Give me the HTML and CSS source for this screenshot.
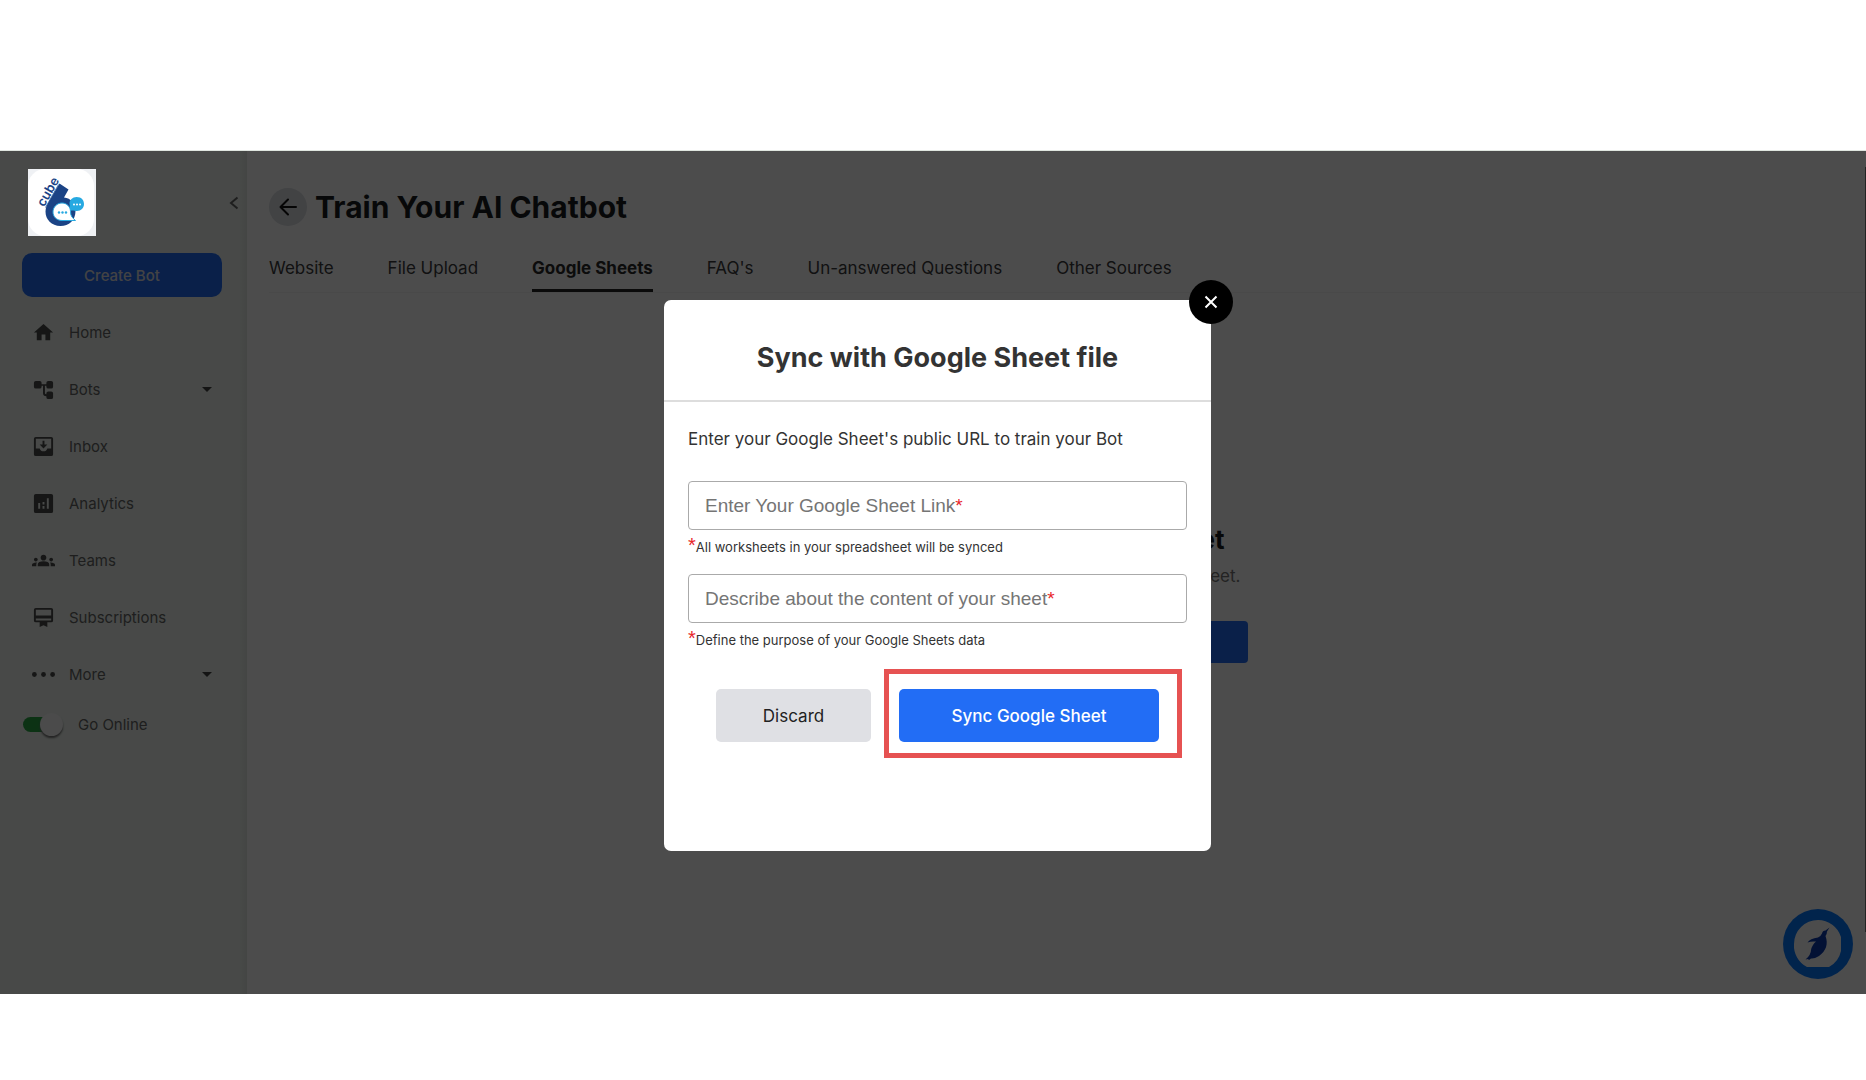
FILE: index.html
```html
<!DOCTYPE html>
<html lang="en">
<head>
<meta charset="utf-8">
<title>Train Your AI Chatbot</title>
<link rel="stylesheet" href="styles.css">
</head>
<body>
<div class="app">
  <aside class="sidebar">
    <div class="brand">
      <svg class="logo" viewBox="0 0 68 67" role="img" aria-label="6 Cube">
        <rect width="68" height="67" fill="#eff1f4"/>
        <rect width="66" height="67" rx="17" fill="#fff"/>
        <path d="M31.500 14.500 40.500 20.500 36 28.500C43 29 47.500 35 47.500 42C47.500 51 41 57 32.500 57C23.500 57 17.500 50.500 17.500 42.500C17.500 38.500 19 36 21 32.500Z" fill="#1b4385"/>
        <path d="M48.500 28C54 28 56 31.500 56 35C56 39 53 42 49 42C46.500 42 46 41.500 39.500 41.500C43 38 41.500 37 41.500 34.500C41.500 31 44.500 28 48.500 28Z" fill="#27a9e1"/>
        <path d="M34 34C39 34 42.500 38 42.500 42.500C42.500 47 44 48.500 47.500 51.500H34C28.500 51.500 25 47.500 25 43C25 38 29 34 34 34Z" fill="#fff" stroke="#27a9e1" stroke-width="1"/>
        <g fill="#27a9e1"><circle cx="31" cy="43.500" r="1.200"/><circle cx="34.500" cy="43.500" r="1.200"/><circle cx="38" cy="43.500" r="1.200"/></g>
        <g fill="#fff"><circle cx="46" cy="35.500" r="1"/><circle cx="49" cy="35.500" r="1"/><circle cx="52" cy="35.500" r="1"/></g>
        <path d="M17.500 38.500 30.500 15.500" stroke="#1b4385" stroke-width=".7"/>
        <text class="logo-text" transform="translate(16 38.500) rotate(-60)">cube</text>
      </svg>
      <button class="collapse" aria-label="Collapse menu"><svg width="10" height="14" viewBox="0 0 10 14" fill="none" stroke="currentColor" stroke-width="2"><path d="M8.500 1.500 2 7 8.500 12.500"/></svg></button>
    </div>
    <button class="create">Create Bot</button>
    <nav class="menu">
      <a href="#"><svg viewBox="0 0 24 24"><path d="M10 20v-6h4v6h5v-8h3L12 3 2 12h3v8z"/></svg><span>Home</span></a>
      <a href="#"><svg viewBox="0 0 24 24"><path d="M2 5q0-2 2-2h4q2 0 2 2v1.500h5V5q0-2 2-2h3q2 0 2 2v4q0 2-2 2h-3q-2 0-2-2v-.800h-1.500V16q0 1 1.500 1v-1q0-2 2-2h3q2 0 2 2v4q0 2-2 2h-3q-2 0-2-2v-1q-3.500 0-3.500-3V8.200H10V9q0 2-2 2H4q-2 0-2-2z"/></svg><span>Bots</span><i class="caret"></i></a>
      <a href="#"><svg viewBox="0 0 24 24"><path fill-rule="evenodd" d="M4 2h16q2 0 2 2v16q0 2-2 2H4q-2 0-2-2V4q0-2 2-2zm0 2v10h4q1 3 4 3t4-3h4V4zm7 2h2v4h3l-4 4-4-4h3z"/></svg><span>Inbox</span></a>
      <a href="#"><svg viewBox="0 0 24 24"><path fill-rule="evenodd" d="M4 2h16q2 0 2 2v16q0 2-2 2H4q-2 0-2-2V4q0-2 2-2zm2.500 9.500v6h2v-6zm4.500 3v3h2v-3zm0-4v2.500h2V10.500zm4.500-4v11h2v-11z"/></svg><span>Analytics</span></a>
      <a href="#"><svg viewBox="0 0 24 24"><path d="M12 12.750c1.630 0 3.070.390 4.240.900 1.080.480 1.760 1.560 1.760 2.730V18H6v-1.610c0-1.180.680-2.260 1.760-2.730 1.170-.520 2.610-.910 4.240-.910zM4 13c1.100 0 2-.900 2-2s-.900-2-2-2-2 .900-2 2 .900 2 2 2zm1.130 1.100C2.900 13.800 0 14.800 0 16.430V18h4.500v-1.610c0-.830.230-1.610.630-2.290zM20 13c1.100 0 2-.900 2-2s-.900-2-2-2-2 .900-2 2 .900 2 2 2zm4 3.430c0-1.630-2.900-2.630-5.130-2.330.400.680.630 1.460.630 2.290V18H24zM12 6c1.660 0 3 1.340 3 3s-1.340 3-3 3-3-1.340-3-3 1.340-3 3-3z"/></svg><span>Teams</span></a>
      <a href="#"><svg viewBox="0 0 24 24"><path fill-rule="evenodd" d="M4 2h16q2 0 2 2v11q0 2-2 2h-4v5l-4-2-4 2v-5H4q-2 0-2-2V4q0-2 2-2zm0 2v6h16V4zm0 9v2h16v-2z"/></svg><span>Subscriptions</span></a>
      <a href="#"><svg viewBox="0 0 24 24"><circle cx="2.500" cy="12" r="2.500"/><circle cx="12" cy="12" r="2.500"/><circle cx="21.500" cy="12" r="2.500"/></svg><span>More</span><i class="caret"></i></a>
    </nav>
    <label class="online"><input type="checkbox" role="switch" checked><span>Go Online</span></label>
  </aside>
  <main class="main">
    <header class="heading">
      <button class="back" aria-label="Back"><svg width="18" height="18" viewBox="0 0 18 18" fill="none" stroke="currentColor" stroke-width="2" stroke-linecap="round" stroke-linejoin="round"><path d="M17 9H1.500M9 1.500 1.500 9 9 16.500"/></svg></button>
      <h1>Train Your AI Chatbot</h1>
    </header>
    <nav class="tabs">
      <a href="#">Website</a><a href="#">File Upload</a><a href="#" class="active">Google Sheets</a><a href="#">FAQ's</a><a href="#">Un-answered Questions</a><a href="#">Other Sources</a>
    </nav>
    <section class="empty">
      <h2>Sheet</h2>
      <p>sheet.</p>
      <button aria-label="Add sheet"></button>
    </section>
  </main>
  <div class="scrollbar"></div>
  <button class="assistant" aria-label="Assistant"><svg width="70" height="70" viewBox="0 0 70 70"><circle cx="35" cy="35" r="35" fill="#0678ff"/><path d="M35 11a24 24 0 0 1 23 17v14a24 24 0 0 1-12 16H24A24 24 0 0 1 11 35 24 24 0 0 1 35 11z" fill="#fff"/><path d="M46.500 18.500 44 22.500Q44 25 42.500 27C45.500 35 43 42 36 47Q31 50 28 49.500L26 51 25 50 22.500 50.500Q28 46 28 41 29 36 33 32.500 28 32 24.500 33.500 27 29.500 35 28.500 38 27 39 24.500 39.500 21.500 42.500 21.500Z" fill="#0b3bb0"/></svg></button>
  <div class="backdrop">
    <div class="modal" role="dialog" aria-labelledby="dialog-title">
      <button class="close" aria-label="Close"><svg width="14" height="14" viewBox="0 0 14 14" stroke="currentColor" stroke-width="2"><path d="m1.500 1.500 11 11M12.500 1.500l-11 11"/></svg></button>
      <h2 class="modal-title" id="dialog-title">Sync with Google Sheet file</h2>
      <form class="modal-body">
        <p class="intro">Enter your Google Sheet's public URL to train your Bot</p>
        <div class="field"><input id="link" type="text"><label for="link">Enter Your Google Sheet Link<b>*</b></label></div>
        <p class="hint"><b>*</b>All worksheets in your spreadsheet will be synced</p>
        <div class="field"><input id="about" type="text"><label for="about">Describe about the content of your sheet<b>*</b></label></div>
        <p class="hint"><b>*</b>Define the purpose of your Google Sheets data</p>
        <div class="actions">
          <button type="button" class="discard">Discard</button>
          <div class="highlight"><button type="button" class="sync">Sync Google Sheet</button></div>
        </div>
      </form>
    </div>
  </div>
</div>
</body>
</html>
```
FILE: styles.css
```css
* { box-sizing: border-box; }
body { margin: 0; padding: 150px 0 86px; background: #fff; font-family: Inter, "Liberation Sans", sans-serif; color: #333; }
h1, h2, p { margin: 0; }
a { color: inherit; text-decoration: none; }
button { border: 0; padding: 0; font: inherit; color: inherit; background: none; cursor: pointer; }
svg { display: block; }

.app { position: relative; display: flex; min-height: calc(100vh - 236px); border-top: 1px solid #dfe5df; background: #fff; }

.sidebar { flex: none; width: 247px; padding: 18px 0; background: linear-gradient(to right, #f0f6f1 97%, #e4e9e4); font-size: 15px; color: #666; }
.brand { display: flex; justify-content: space-between; padding: 0 8px 0 28px; }
.logo { position: relative; z-index: 2; width: 68px; height: 67px; }
.logo-text { font: 600 13px Inter, sans-serif; fill: #1b4385; }
.collapse { align-self: center; color: #666; }
.create { display: block; width: 200px; height: 44px; margin: 17px 0 7px 22px; border-radius: 10px; background: #226df5; color: #e0e0e4; font-size: 15px; font-weight: 500; }
.menu a { display: flex; align-items: center; height: 57px; padding: 0 35px 0 32px; }
.menu svg { width: 23px; height: 23px; fill: #4a4a4a; }
.menu span { margin-left: 14px; }
.caret { margin-left: auto; border: 5px solid transparent; border-top-color: #444; border-bottom: 0; }
.online { display: flex; align-items: center; gap: 15px; height: 42px; padding-left: 23px; }
.online input { appearance: none; position: relative; width: 40px; height: 15px; margin: 0; }
.online input::before { content: ""; position: absolute; inset: 0 5px 0 0; border-radius: 8px; background: #28a745; }
.online input::after { content: ""; position: absolute; right: 0; top: -4px; width: 23px; height: 23px; border-radius: 50%; background: #fbfbfb; box-shadow: 0 2px 2px #777; }

.main { flex: 1; padding: 37px 0 0 22px; color: #3a3a3c; }
.heading { display: flex; align-items: center; gap: 8px; height: 38px; }
.back { display: grid; place-items: center; width: 38px; height: 38px; border-radius: 50%; background: #dcdfe4; color: #111; }
h1 { font-size: 30px; font-weight: 700; color: #181c20; white-space: nowrap; }
.tabs { display: flex; gap: 54px; margin-top: 16px; border-bottom: 1px solid #f3f3f3; font-size: 17px; white-space: nowrap; }
.tabs a { height: 50px; padding-top: 14px; line-height: 24px; }
.tabs .active { border-bottom: 3px solid #222; font-weight: 700; color: #2a2a2a; }
.empty { width: 360px; margin: 231px auto 0; text-align: right; }
.empty h2 { padding-right: 23px; font-size: 26px; line-height: 32px; color: #181c20; }
.empty p { padding: 8px 7px 33px; font-size: 17px; line-height: 24px; color: #777; }
.empty button { width: 100%; height: 42px; border-radius: 4px; background: #226df5; }

.scrollbar { position: absolute; top: 16px; right: 0; width: 1px; height: 765px; background: #777; }
.assistant { position: absolute; right: 13px; bottom: 15px; }

.backdrop { position: absolute; inset: 0; z-index: 1; display: grid; place-items: center; padding: 6px 0 0 9px; background: rgba(0, 0, 0, .7); }
.modal { position: relative; width: 547px; padding-bottom: 93px; border-radius: 7px; background: #fff; }
.close { position: absolute; top: -20px; right: -22px; display: grid; place-items: center; width: 44px; height: 44px; border-radius: 50%; background: #000; color: #fff; }
.modal-title { padding: 42px 0 26px; border-bottom: 2px solid #ddd; font-size: 27px; line-height: 32px; text-align: center; color: #333; }
.modal-body { padding: 25px 24px 0; }
.intro { margin-bottom: 30px; font-size: 17px; line-height: 24px; white-space: nowrap; }
.field { position: relative; }
.field input { display: block; width: 100%; height: 49px; border: 1px solid #aaa; border-radius: 4px; padding: 0 17px; }
.field label { position: absolute; left: 17px; top: 13px; font: 19px/24px "Liberation Sans", sans-serif; color: #757575; }
b { color: #e8262b; font-weight: 400; }
.hint { margin: 5px 0 15px; font-size: 13px; line-height: 24px; }
.hint b { font-family: "Liberation Sans", sans-serif; font-size: 20px; line-height: 20px; }
.actions { display: flex; align-items: flex-start; margin-top: 17px; padding-left: 28px; font-size: 17px; }
.discard { width: 155px; height: 53px; margin-top: 20px; border-radius: 5px; background: #dfe0e4; color: #222; }
.highlight { margin-left: 13px; padding: 15px 18px 11px 10px; border: 5px solid #e65252; }
.sync { display: block; width: 260px; height: 53px; border-radius: 5px; background: #226df5; color: #fff; font-weight: 500; }
```
